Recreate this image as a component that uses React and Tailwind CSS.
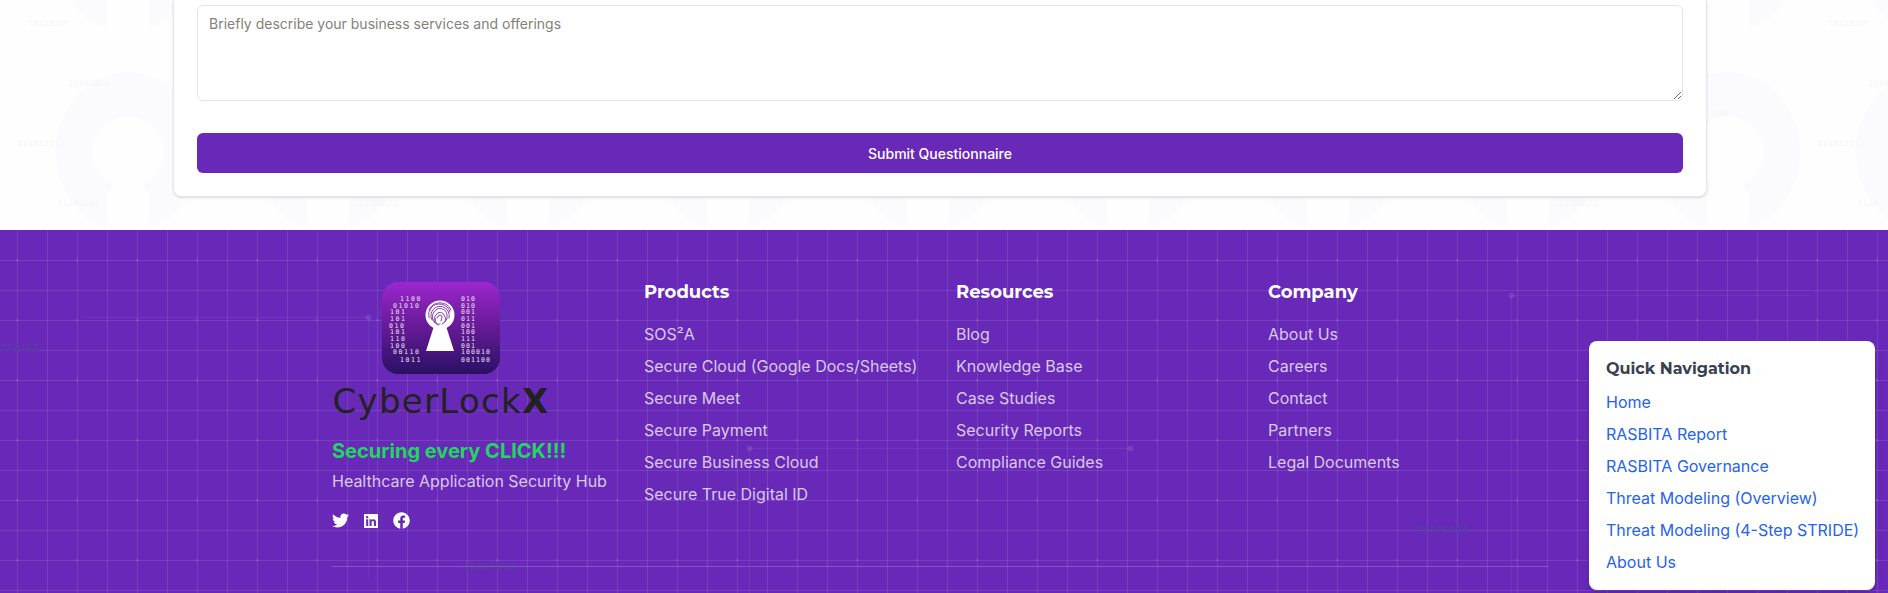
import { FaTwitter, FaLinkedin, FaFacebook } from 'react-icons/fa';

const products = ['SOS²A', 'Secure Cloud (Google Docs/Sheets)', 'Secure Meet', 'Secure Payment', 'Secure Business Cloud', 'Secure True Digital ID'];
const resources = ['Blog', 'Knowledge Base', 'Case Studies', 'Security Reports', 'Compliance Guides'];
const company = ['About Us', 'Careers', 'Contact', 'Partners', 'Legal Documents'];
const quickLinks = ['Home', 'RASBITA Report', 'RASBITA Governance', 'Threat Modeling (Overview)', 'Threat Modeling (4-Step STRIDE)', 'About Us'];

const rowY = [19, 25.6, 32.3, 39, 45.6, 52.3, 59, 65.6, 72.3, 79.5];
const leftBits = [[18, '1100'], [11, '01010'], [8, '101'], [8, '101'], [7, '010'], [8, '101'], [8, '110'], [8, '100'], [11, '00110'], [18, '1011']];
const rightBits = ['010', '010', '001', '011', '001', '100', '111', '001', '100010', '001100'];

// faint keyholes + binary text behind the form
function KeyholePattern() {
  return (
    <svg className="absolute inset-0 w-full h-full" aria-hidden="true">
      <defs>
        <pattern id="keyholes" width="200" height="200" patternUnits="userSpaceOnUse" patternTransform="translate(128 152)">
          <ellipse cx="0" cy="0" rx="72" ry="80" fill="#fbfbfd" />
          <ellipse cx="0" cy="200" rx="72" ry="80" fill="#fbfbfd" />
          <ellipse cx="200" cy="0" rx="72" ry="80" fill="#fbfbfd" />
          <ellipse cx="200" cy="200" rx="72" ry="80" fill="#fbfbfd" />
          <circle cx="0" cy="0" r="36" fill="#fefefe" />
          <circle cx="200" cy="0" r="36" fill="#fefefe" />
          <circle cx="0" cy="200" r="36" fill="#fefefe" />
          <circle cx="200" cy="200" r="36" fill="#fefefe" />
          <path d="M-21 45 A21 15 0 0 1 21 45 V90 H-21 Z" fill="#fefefe" />
          <path d="M179 45 A21 15 0 0 1 221 45 V90 H179 Z" fill="#fefefe" />
        </pattern>
      </defs>
      <rect width="100%" height="100%" fill="url(#keyholes)" />
      <g fill="#f6f6f7" fontFamily="'Liberation Mono', monospace" fontSize="8.5">
        <text x="28" y="26">10110100</text>
        <text x="68" y="86">11001010</text>
        <text x="18" y="146">10101011</text>
        <text x="58" y="206">11100101</text>
        <text x="358" y="206">11100101</text>
        <text x="1558" y="206">11100101</text>
        <text x="1708" y="116">1100</text>
        <text x="1828" y="26">10110100</text>
        <text x="1868" y="86">1100</text>
        <text x="1818" y="146">10101011</text>
        <text x="1858" y="206">1110</text>
      </g>
    </svg>
  );
}

// circuit traces and floating binary on the footer, coordinates from the footer's top-left
function CircuitLines() {
  return (
    <svg className="absolute inset-0 w-full h-full" aria-hidden="true">
      <g stroke="#fff" strokeOpacity="0.06" fill="none">
        <path d="M82 86.5 H368.5 V348" />
        <path d="M1130 217.5 H749.5 V362" />
        <path d="M1811 64.5 H1511.5 V362" />
      </g>
      <g fill="#fff" fillOpacity="0.1">
        <circle cx="368.5" cy="86.5" r="3" />
        <circle cx="749.5" cy="217.5" r="3" />
        <circle cx="1130.5" cy="217.5" r="3" />
        <circle cx="1511.5" cy="64.5" r="3" />
      </g>
      <g fill="#5a3aa6" fontFamily="'Liberation Mono', monospace" fontSize="11" fontWeight="700">
        <text x="0" y="120">110101</text>
        <text x="1416" y="302">01101001</text>
        <text x="463" y="339">11001010</text>
      </g>
    </svg>
  );
}

function LogoMark() {
  return (
    <svg width="118" height="92" viewBox="0 0 118 92" className="block">
      <defs>
        <linearGradient id="logoBg" x1="0" y1="0" x2="0" y2="1">
          <stop offset="0" stopColor="#9c27cf" />
          <stop offset="0.45" stopColor="#6a1b9a" />
          <stop offset="1" stopColor="#2a1065" />
        </linearGradient>
      </defs>
      <rect width="118" height="92" rx="16" fill="url(#logoBg)" />
      <g fill="#e9e3f2" fontFamily="'DejaVu Sans Mono', monospace" fontSize="6.5">
        {leftBits.map(([x, t], i) => <text key={i} x={x} y={rowY[i]} letterSpacing="1.6">{t}</text>)}
        {rightBits.map((t, i) => <text key={i} x="79" y={rowY[i]} letterSpacing="1.1">{t}</text>)}
      </g>
      <circle cx="58" cy="33" r="14.5" fill="#fff" />
      <path d="M52 44 L64 44 L72 69 L44 69 Z" fill="#fff" />
      <g fill="none" stroke="#7b2aa8" strokeWidth="0.9" strokeLinecap="round">
        <path d="M47 28 A12 12 0 0 1 69 28" />
        <path d="M47 36 A11 11 0 0 1 49 26 A11 11 0 0 1 68 30" />
        <path d="M50 38 A9 9 0 0 1 66 29 A9 9 0 0 1 67 36" />
        <path d="M53 41 A8 8 0 0 1 52 30 A7 7 0 0 1 65 33 A7 7 0 0 1 63 40" />
        <path d="M56 43 A6 6 0 0 1 54 33 A4.5 4.5 0 0 1 62.5 34 A5 5 0 0 1 60 42" />
        <path d="M58 42 A3 3 0 0 1 56 35 A2 2 0 0 1 60 35 L59 39" />
      </g>
    </svg>
  );
}

function FooterColumn({ title, links }) {
  return (
    <div>
      <h3 className="font-['Montserrat','DejaVu_Sans',sans-serif] text-[18px] leading-7 font-bold text-white mb-3">{title}</h3>
      <ul>
        {links.map((link) => (
          <li key={link} className="h-8 leading-8 text-[16px] text-white/75">{link}</li>
        ))}
      </ul>
    </div>
  );
}

export default function App() {
  return (
    <div className="relative h-[593px] overflow-hidden bg-[#fefefe] font-['Inter',sans-serif]">
      {/* form section */}
      <section className="relative h-[230px] pr-2">
        <KeyholePattern />
        <div className="relative mx-auto w-[1534px] h-[197px] bg-white border border-t-0 border-[#e6e6e6] rounded-b-lg shadow-sm px-[23px] pt-[5px]">
          <textarea
            placeholder="Briefly describe your business services and offerings"
            className="block w-full h-[96px] px-[11px] py-2 text-[14px] leading-5 border border-[#e5e5e5] rounded-md outline-none placeholder:text-[#857f7a]"
          />
          <button className="block w-full h-10 mt-[32px] rounded-md bg-[#6829b8] text-white text-[14px] font-medium">
            Submit Questionnaire
          </button>
        </div>
      </section>

      {/* footer */}
      <footer className="relative h-[363px] border-t border-[#6829b8] bg-[#6829b8] pr-2 bg-[linear-gradient(rgba(255,255,255,0.1)_1px,transparent_1px),linear-gradient(90deg,rgba(255,255,255,0.1)_1px,transparent_1px)] bg-[size:30px_30px] bg-[position:17px_-1px]">
        {/* grid nodes */}
        <div className="absolute inset-0 bg-[radial-gradient(circle,rgba(255,255,255,0.1)_1.5px,transparent_1.5px)] bg-[size:60px_60px] bg-[position:-13px_-1px]" />
        <CircuitLines />

        <div className="relative mx-auto w-[1216px] pt-[47px]">
          <div className="grid grid-cols-4 gap-8">
            <div>
              <div className="flex flex-col items-center w-[218px]">
                <div className="mt-1"><LogoMark /></div>
                <div className="mt-[7px] font-['DejaVu_Sans',sans-serif] text-[34px] leading-[40px] text-[#222] tracking-[1.3px] whitespace-nowrap">
                  CyberLock<span className="font-bold">X</span>
                </div>
              </div>
              <p className="mt-4 text-[20px] leading-7 font-bold text-[#22d760]">Securing every CLICK!!!</p>
              <p className="mt-1 text-[16px] leading-6 text-white/75">Healthcare Application Security Hub</p>
              <div className="flex items-center gap-[14px] mt-[19px] text-white">
                <FaTwitter size={17} />
                <FaLinkedin size={16} />
                <FaFacebook size={17} />
              </div>
            </div>
            <FooterColumn title="Products" links={products} />
            <FooterColumn title="Resources" links={resources} />
            <FooterColumn title="Company" links={company} />
          </div>
          <div className="mt-[37px] h-px bg-white/20" />
        </div>

        {/* quick navigation overlay */}
        <nav className="absolute top-[110px] right-[13px] w-[286px] h-[249px] bg-white rounded-lg shadow-lg px-[17px] pt-4">
          <h4 className="font-['Montserrat','DejaVu_Sans',sans-serif] text-[16px] leading-6 font-bold text-[#374151] mb-[5px]">Quick Navigation</h4>
          {quickLinks.map((link) => (
            <div key={link} className="h-8 leading-8 text-[16px] text-[#2563eb] whitespace-nowrap">{link}</div>
          ))}
        </nav>
      </footer>
    </div>
  );
}
